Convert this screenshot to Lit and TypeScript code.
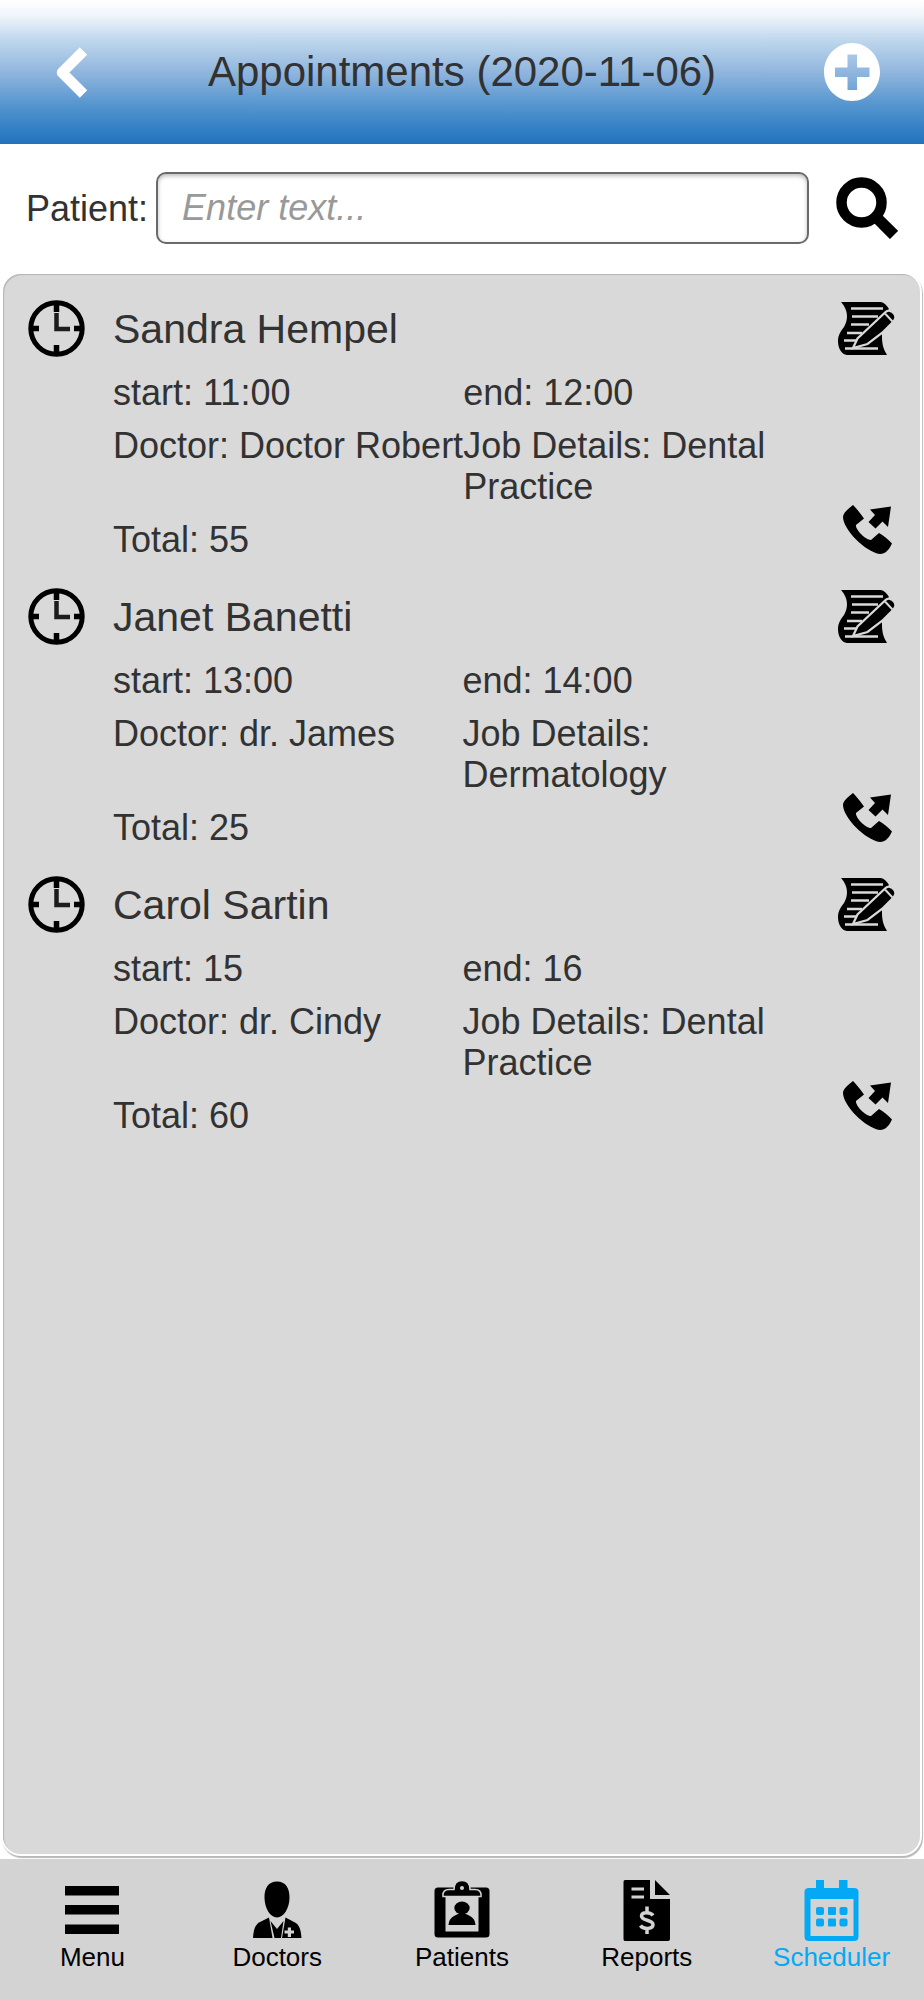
import { LitElement, html, css, svg } from "lit";
import { customElement, property, state } from "lit/decorators.js";
import { classMap } from "lit/directives/class-map.js";

interface Appointment {
  patient: string;
  start: string;
  end: string;
  doctor: string;
  job: string;
  total: number;
}

const appointments: Appointment[] = [
  { patient: "Sandra Hempel", start: "11:00", end: "12:00", doctor: "Doctor Robert", job: "Dental Practice", total: 55 },
  { patient: "Janet Banetti", start: "13:00", end: "14:00", doctor: "dr. James", job: "Dermatology", total: 25 },
  { patient: "Carol Sartin", start: "15", end: "16", doctor: "dr. Cindy", job: "Dental Practice", total: 60 },
];

const icons = {
  back: svg`<path d="M29.500 5 8 26.500 29.500 48" fill="none" stroke="#fff" stroke-width="10.500" stroke-linejoin="round"/>`,
  plus: svg`<path fill="#fff" fill-rule="evenodd" d="M28 0C43.500 0 56 13 56 29S43.500 58 28 58 0 45 0 29 12.500 0 28 0ZM23.500 11.500V24.500H11V34H23.500V47H33V34H45.500V24.500H33V11.500Z"/>`,
  search: svg`<circle cx="25.500" cy="25.500" r="20" fill="none" stroke="#000" stroke-width="10.500"/>
    <path d="M42 42 58 58" stroke="#000" stroke-width="11.500"/>`,
  clock: svg`<circle cx="28.500" cy="28.500" r="25.700" fill="none" stroke="#000" stroke-width="5"/>
    <path d="M28.500 1V12M28.500 45V56M1 28.500H11M46 28.500H56" stroke="#000" stroke-width="5.500"/>
    <path d="M28.500 13V29H42" fill="none" stroke="#1c1c1c" stroke-width="4.500"/>`,
  edit: svg`<path d="M3 0H43C47 1 49 4 51 7L44 18 44 35C44 43 46 48 49 53H9C3 52 0 46 0 39 0 33 3 29 6 25 10 18 11 9 3 0Z"/>
    <g stroke="#d9d9d9" stroke-width="2.600"><path d="M13 6.500H45M14 14.500H40M13 22.500H31M9 31H24M6 38.500H20M7 46.500H40"/></g>
    <path d="M15 46 19.500 36.500 46.500 11 C50 7 54 9 56 11.500S58 17 55 20L44 31 29.500 42Z" stroke="#d9d9d9" stroke-width="2.200"/>
    <path d="M47 11.500 54.500 19.500" stroke="#d9d9d9" stroke-width="2"/>`,
  call: svg`<path d="M10 0C13 3 18 9 21 13.500L13 20C12 24 22 35 28 35L36 28C41 31 45 34 49 38.500 46 45 42 49 37 49 22 47 0 24 0 12 0 8 5 4 10 0Z"/>
    <path d="M27 4.500 48 1.500 45 22 39.500 16.500 32.500 23.500 25.500 17 32 10Z"/>`,
  menu: svg`<path fill="currentColor" d="M3 6H57V15.500H3ZM3 25H57V34.500H3ZM3 44.500H57V54H3Z"/>`,
  doctors: svg`<g fill="currentColor"><path d="M30 1.500C38.500 1.500 42.800 8 42.500 18 42.300 28 37 37.500 30 37.500S17.700 28 17.500 18C17.200 8 21.500 1.500 30 1.500Z"/>
    <path d="M22 37.500 25.500 58H6C6.500 50 8 45 12 42.500Z"/>
    <path d="M23.500 41 30 49 36.500 41 34 58H27.500Z"/>
    <path fill-rule="evenodd" d="M38.500 37.500 48 42.500C52.500 45 54 50 54.500 58H35ZM40.800 47.500V50.500H37.500V53.500H40.800V57H44V53.500H47V50.500H44V47.500Z"/></g>`,
  patients: svg`<path fill="currentColor" fill-rule="evenodd" d="M6 7.500H54Q57.500 7.500 57.500 11V54Q57.500 57.500 54 57.500H6Q2.500 57.500 2.500 54V11Q2.500 7.500 6 7.500ZM13.500 16V51.500H46.500V16Z"/>
    <path fill="currentColor" stroke="#d3d3d3" stroke-width="1.500" d="M11 16.500C10.500 11.500 13 9.500 17 9.500H22C22 4 25 .5 30 .5S38 4 38 9.500H43C47 9.500 49.500 11.500 49 16.500Z"/>
    <circle cx="30" cy="8" r="2" fill="#d3d3d3"/>
    <ellipse cx="30" cy="28" rx="7.700" ry="6.500" fill="currentColor"/>
    <path fill="currentColor" d="M16.500 45C17 39 20 36.500 26 34H34C40 36.500 43 39 43.500 45Z"/>`,
  reports: svg`<path fill="currentColor" d="M8 0H33V19H53V59Q53 61 51 61H8Q6.500 61 6.500 59V2Q6.500 0 8 0ZM38 0 53 15H38Z"/>
    <path d="M14.500 9H27M14.500 17H27" stroke="#d3d3d3" stroke-width="3"/>
    <path d="M36 35.500C34 32.500 24.500 31 24.500 36S36 39.500 36 44.500 26 49.500 23.500 45.500M30 26.500V32M30 48V54" fill="none" stroke="#d3d3d3" stroke-width="3.500"/>`,
  scheduler: svg`<path fill="currentColor" fill-rule="evenodd" d="M14 0H22V8H37V0H45.500V8H52Q56.500 8 56.500 12V56.500Q56.500 61 52 61H7Q2.500 61 2.500 56.500V12Q2.500 8 7 8H14ZM8.500 19V56H51.500V19Z"/>
    <g fill="currentColor"><rect x="14" y="27" width="8" height="8" rx="2"/><rect x="26" y="27" width="8" height="8" rx="1"/><rect x="37.500" y="27" width="8" height="8" rx="2"/>
    <rect x="14" y="38.500" width="8" height="8" rx="2"/><rect x="26" y="38.500" width="8" height="8" rx="1"/><rect x="37.500" y="38.500" width="8" height="8" rx="2"/></g>`,
};

@customElement("appointment-item")
class AppointmentItem extends LitElement {
  @property({ attribute: false }) item!: Appointment;

  static styles = css`
    :host {
      display: grid;
      grid-template-columns: 61px minmax(0, 1fr) 62px;
      column-gap: 24px;
      padding: 13px 22px 9px 25px;
    }
    .name {
      margin: 6px 0 13px;
      font-size: 41px;
      line-height: 47px;
      font-weight: 400;
    }
    .details {
      display: grid;
      grid-template-columns: minmax(max-content, 1fr) minmax(0, 1fr);
      margin: 0;
    }
    .cell {
      padding: 6px 0;
      line-height: 41px;
      min-width: 0;
    }
    .actions {
      display: flex;
      flex-direction: column;
      justify-content: space-between;
      align-items: center;
      padding: 2px 0 12px;
    }
    .icon-button {
      display: block;
      padding: 0;
      border: 0;
      background: none;
      cursor: pointer;
    }
    .icon {
      display: block;
    }
  `;

  render() {
    const a = this.item;
    return html`
      <svg class="icon" width="57" height="57" viewBox="0 0 57 57" aria-hidden="true">${icons.clock}</svg>
      <div>
        <h2 class="name">${a.patient}</h2>
        <div class="details">
          <div class="cell">${`start: ${a.start}`}</div>
          <div class="cell">${`end: ${a.end}`}</div>
          <div class="cell">${`Doctor: ${a.doctor}`}</div>
          <div class="cell">${`Job Details: ${a.job}`}</div>
          <div class="cell">${`Total: ${a.total}`}</div>
        </div>
      </div>
      <div class="actions">
        <button class="icon-button" aria-label="Edit appointment">
          <svg class="icon" width="58" height="53" viewBox="0 0 58 53">${icons.edit}</svg>
        </button>
        <button class="icon-button" aria-label="Call patient">
          <svg class="icon" width="49" height="49" viewBox="0 0 49 49">${icons.call}</svg>
        </button>
      </div>
    `;
  }
}

@customElement("app-root")
class AppRoot extends LitElement {
  @state() private active = "Scheduler";

  private tabs = [
    { label: "Menu", icon: icons.menu },
    { label: "Doctors", icon: icons.doctors },
    { label: "Patients", icon: icons.patients },
    { label: "Reports", icon: icons.reports },
    { label: "Scheduler", icon: icons.scheduler },
  ];

  static styles = css`
    :host {
      display: flex;
      flex-direction: column;
      min-height: 100vh;
      background: #fff;
      color: #323232;
      font-family: "Liberation Sans", Arial, sans-serif;
      font-size: 36px;
      line-height: 41px;
    }
    .header {
      display: grid;
      grid-template-columns: 144px 1fr 144px;
      align-items: center;
      justify-items: center;
      height: 144px;
      background: linear-gradient(#fff 0%, #f1f6fb 10%, #bcd5ec 29%, #8cb3dc 52%, #5294ce 74%, #2b7ac2 94%, #2271ba 100%);
    }
    .title {
      margin: 0;
      font-size: 42px;
      line-height: 48px;
      font-weight: 400;
    }
    .icon-button {
      display: block;
      padding: 0;
      border: 0;
      background: none;
      cursor: pointer;
    }
    .icon {
      display: block;
    }
    .search {
      display: flex;
      align-items: center;
      padding: 28px 26px 30px;
    }
    .field {
      flex: 1;
      min-width: 0;
      height: 72px;
      box-sizing: border-box;
      margin: 0 27px 0 8px;
      padding: 0 24px;
      border: 2px solid #6a6a6a;
      border-radius: 10px;
      background: #fff;
      box-shadow: inset 0 2px 4px #bbb;
      color: inherit;
      font: inherit;
      outline: none;
    }
    .field::placeholder {
      color: #999;
      font-style: italic;
      opacity: 1;
    }
    .panel {
      flex: 1;
      margin: 0 4px 5px 3px;
      padding: 13px 0;
      box-sizing: border-box;
      border-radius: 18px;
      background: #d9d9d9;
      box-shadow: inset 1px 1px 1px #b4b4b4, 0 0 0 2px #fff, 1px 2px 1px 2px #b8b8b8;
    }
    .nav {
      display: grid;
      grid-template-columns: repeat(5, 1fr);
      padding: 21px 0 28px;
      background: #d3d3d3;
    }
    .tab {
      display: flex;
      flex-direction: column;
      align-items: center;
      gap: 1px;
      color: #000;
      font-size: 26px;
      line-height: 30px;
      text-decoration: none;
    }
    .selected {
      color: #03a9f4;
    }
  `;

  render() {
    return html`
      <header class="header">
        <button class="icon-button" aria-label="Back">
          <svg class="icon" width="36" height="53" viewBox="0 0 36 53">${icons.back}</svg>
        </button>
        <h1 class="title">Appointments (2020-11-06)</h1>
        <button class="icon-button" aria-label="Add appointment">
          <svg class="icon" width="56" height="58" viewBox="0 0 56 58">${icons.plus}</svg>
        </button>
      </header>
      <form class="search" @submit=${(e: Event) => e.preventDefault()}>
        <label for="patient">Patient:</label>
        <input class="field" id="patient" type="text" placeholder="Enter text..." />
        <button class="icon-button" aria-label="Search">
          <svg class="icon" width="62" height="62" viewBox="0 0 62 62">${icons.search}</svg>
        </button>
      </form>
      <main class="panel">
        ${appointments.map((a) => html`<appointment-item .item=${a}></appointment-item>`)}
      </main>
      <nav class="nav">
        ${this.tabs.map(
          (t) => html`
            <a class=${classMap({ tab: true, selected: t.label === this.active })} href="#${t.label.toLowerCase()}" @click=${() => (this.active = t.label)}>
              <svg class="icon" width="60" height="61" viewBox="0 0 60 61" aria-hidden="true">${t.icon}</svg>
              ${t.label}
            </a>
          `,
        )}
      </nav>
    `;
  }
}
